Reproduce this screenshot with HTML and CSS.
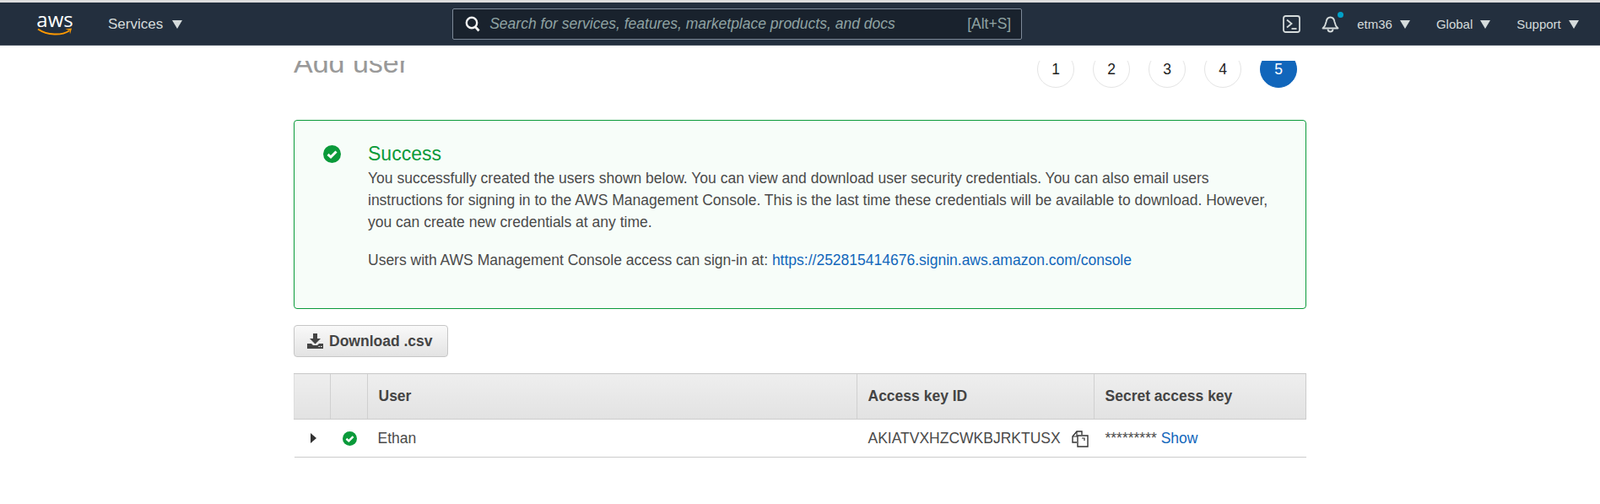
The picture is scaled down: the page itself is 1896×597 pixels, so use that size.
FILE: index.html
```html
<!DOCTYPE html>
<html>
  <head>
    <title>Add user</title>
    <link rel="stylesheet" href="styles.css">
  </head>
  <body>
    <nav class="navbar">
      <a class="logo">
        <span class="logo-text">aws</span>
        <svg class="logo-smile" width="42" height="11" viewBox="0 0 42 11">
          <path d="M1 2.500C12 10 29 10.500 38 4.500" fill="none" stroke="#f90" stroke-width="2"/>
          <path d="M33.500 2.500L41 1.500L39 8.500L38.500 4Z" fill="#f90"/>
        </svg>
      </a>
      <div class="nav-item services">Services <span class="caret"></span></div>
      <div class="search">
        <svg class="search-icon" width="20" height="20" viewBox="0 0 20 20">
          <circle cx="9" cy="9" r="6.200" fill="none" stroke="#f2f3f3" stroke-width="2.400"/>
          <path d="M13 13.500L17.500 18.500" stroke="#f2f3f3" stroke-width="2.800"/>
        </svg>
        <span class="search-hint">Search for services, features, marketplace products, and docs</span>
        <span class="search-key">[Alt+S]</span>
      </div>
      <svg class="icon-shell" width="21" height="21" viewBox="0 0 21 21">
        <rect x="1" y="1" width="19" height="19" rx="2.500" fill="none" stroke="#d5dbdb" stroke-width="1.800"/>
        <path d="M5 5.500L10.500 10L5 14.500" fill="none" stroke="#d5dbdb" stroke-width="1.800"/>
        <path d="M10.500 16H16.500" stroke="#d5dbdb" stroke-width="1.800"/>
      </svg>
      <div class="bell">
        <svg width="22" height="22" viewBox="0 0 22 22">
          <path d="M1.500 16.500C4.500 14 5 12 5.500 9C6 5.500 8 3.500 10.500 3.500C13 3.500 15 5.500 15.500 9C16 12 16.500 14 19.500 16.500Z" fill="none" stroke="#d5dbdb" stroke-width="1.800" stroke-linejoin="round"/>
          <path d="M7.500 17.500A3 3 0 0 0 13.500 17.500" fill="none" stroke="#d5dbdb" stroke-width="1.800"/>
        </svg>
        <span class="bell-dot"></span>
      </div>
      <div class="nav-item user">etm36 <span class="caret"></span></div>
      <div class="nav-item region">Global <span class="caret"></span></div>
      <div class="nav-item support">Support <span class="caret"></span></div>
    </nav>

    <main class="viewport">
      <div class="container">
        <div class="title-row">
          <h1>Add user</h1>
          <div class="steps">
            <div class="step">1</div>
            <div class="step">2</div>
            <div class="step">3</div>
            <div class="step">4</div>
            <div class="step active">5</div>
          </div>
        </div>

        <div class="alert">
          <svg class="check alert-icon" width="21" height="21" viewBox="0 0 21 21">
            <circle cx="10.500" cy="10.500" r="10.500" fill="#0a9a3a"/>
            <path d="M5.500 10.800L9 14L15.500 7.500" fill="none" stroke="#fff" stroke-width="3"/>
          </svg>
          <div class="alert-body">
            <div class="alert-title">Success</div>
            <p>You successfully created the users shown below. You can view and download user security credentials. You can also email users instructions for signing in to the AWS Management Console. This is the last time these credentials will be available to download. However, you can create new credentials at any time.</p>
            <p class="alert-login">Users with AWS Management Console access can sign-in at: <a href="#">https://252815414676.signin.aws.amazon.com/console</a></p>
          </div>
        </div>

        <button class="btn-download">
          <svg width="19" height="18" viewBox="0 0 19 18">
            <path d="M7 0H12V6H16L9.500 12.500L3 6H7Z" fill="#444"/>
            <path d="M0 12H5L7 14H12L14 12H19V18H0Z" fill="#444"/>
            <path d="M13.500 15.500H15M16 15.500H17.500" stroke="#fff" stroke-width="1"/>
          </svg>
          Download .csv
        </button>

        <table class="users">
          <thead>
            <tr>
              <th class="col-toggle"></th>
              <th class="col-status"></th>
              <th class="col-user">User</th>
              <th class="col-key">Access key ID</th>
              <th>Secret access key</th>
            </tr>
          </thead>
          <tbody>
            <tr>
              <td class="toggle"><span class="caret-right"></span></td>
              <td class="status">
                <svg class="check" width="17" height="17" viewBox="0 0 21 21">
                  <circle cx="10.500" cy="10.500" r="10.500" fill="#0a9a3a"/>
                  <path d="M5.500 10.800L9 14L15.500 7.500" fill="none" stroke="#fff" stroke-width="3"/>
                </svg>
              </td>
              <td class="name">Ethan</td>
              <td class="key">
                AKIATVXHZCWKBJRKTUSX
                <svg class="copy" width="20" height="20" viewBox="0 0 20 20">
                  <path d="M6 14H1V7L6 1H12V5" fill="none" stroke="#333" stroke-width="1.400"/>
                  <path d="M6 1V7H1" fill="none" stroke="#333" stroke-width="1.200"/>
                  <path d="M7 6H19V19H7Z" fill="#fff" stroke="#333" stroke-width="1.400"/>
                  <path d="M12 9H15V12" fill="none" stroke="#333" stroke-width="1.200"/>
                </svg>
              </td>
              <td class="secret"><span class="stars">*********</span> <a href="#">Show</a></td>
            </tr>
          </tbody>
        </table>
      </div>
    </main>
  </body>
</html>
```

FILE: styles.css
```css
html,
body {
  margin: 0;
  padding: 0;
  height: 100%;
  overflow: hidden;
}
body {
  font-family: "Liberation Sans", Arial, sans-serif;
  background: white;
  color: #4a4a4a;
  font-size: 17.5px;
}
a {
  color: #1166bb;
  text-decoration: none;
}

/* top bar */
.navbar {
  display: flex;
  align-items: center;
  height: 50px;
  border-top: 3px solid #ddd;
  border-bottom: 1px solid #414c5a;
  background: #232f3e;
  color: #d5dbdb;
}
.logo {
  display: flex;
  flex-direction: column;
  align-items: center;
  width: 42px;
  margin-left: 44px;
  margin-top: -2px;
}
.logo-text {
  color: white;
  font-family: "Open Sans", sans-serif;
  font-size: 24px;
  line-height: 22px;
}
.logo-smile {
  margin-top: -2px;
}
.nav-item {
  display: flex;
  align-items: center;
  gap: 9px;
  font-size: 15px;
  padding-top: 1px;
}
.caret {
  width: 0;
  height: 0;
  border-left: 6px solid transparent;
  border-right: 6px solid transparent;
  border-top: 10px solid #d5dbdb;
}
.services {
  gap: 11px;
  margin-left: 42px;
  font-size: 17px;
}
.search {
  display: flex;
  align-items: center;
  width: 673px;
  height: 35px;
  margin-left: 320px;
  border: 1px solid #7d8998;
  border-radius: 2px;
  background: #19222d;
}
.search-icon {
  margin-left: 13px;
}
.search-hint {
  margin-left: 10px;
  color: #8fa3a3;
  font-style: italic;
  font-size: 17.5px;
}
.search-key {
  margin-left: auto;
  margin-right: 12px;
  color: #8fa3a3;
  font-size: 17.5px;
}
.icon-shell {
  margin-left: 309px;
}
.bell {
  position: relative;
  display: flex;
  margin-left: 25px;
}
.bell-dot {
  position: absolute;
  top: -3px;
  right: -4px;
  width: 7px;
  height: 7px;
  border-radius: 50%;
  background: #00a1c9;
}
.user {
  margin-left: 20px;
}
.region {
  margin-left: 31px;
}
.support {
  margin-left: 31px;
}

/* scrolled page area, clipped under the bar */
.viewport {
  margin-top: 18px;
  overflow: hidden;
  height: 525px;
}
.container {
  width: 1200px;
  margin: 0 auto;
}
.title-row {
  display: flex;
  justify-content: space-between;
  height: 44px;
  margin-top: -12px;
  padding-right: 11px;
}
h1 {
  margin: 0;
  color: #999;
  font-size: 34px;
  font-weight: normal;
  line-height: 34px;
  margin-top: -3px;
}
.steps {
  display: flex;
  gap: 22px;
}
.step {
  display: flex;
  align-items: center;
  justify-content: center;
  width: 44px;
  height: 44px;
  box-sizing: border-box;
  border: 1px solid #e4e4e4;
  border-radius: 50%;
  color: #222;
  font-size: 17.5px;
}
.step.active {
  border-color: #1166bb;
  background: #1166bb;
  color: white;
}

/* success box */
.alert {
  display: flex;
  height: 224px;
  margin-top: 38px;
  box-sizing: border-box;
  padding: 24px 30px 0 34px;
  border: 1px solid #0a9a3a;
  border-radius: 4px;
  background: #f7fdf9;
}
.alert-icon {
  flex: none;
  margin-top: 5px;
}
.alert-body {
  margin-left: 32px;
  line-height: 26px;
}
.alert-title {
  color: #0a9a3a;
  font-size: 23px;
  line-height: 31px;
}
.alert-body p {
  margin: 0;
}
.alert-body .alert-login {
  margin-top: 19px;
}

.btn-download {
  display: flex;
  align-items: center;
  gap: 7px;
  width: 183px;
  height: 38px;
  margin-top: 19px;
  padding: 0 0 0 15px;
  border: 1px solid #c6c6c6;
  border-radius: 4px;
  background: linear-gradient(#f9f9f9, #e3e3e3);
  color: #444;
  font-family: inherit;
  font-size: 17.5px;
  font-weight: bold;
}

/* users table */
.users {
  width: 1200px;
  margin-top: 19px;
  border-collapse: collapse;
  table-layout: fixed;
}
.users th {
  box-sizing: border-box;
  height: 54px;
  padding: 0 0 0 13px;
  border-top: 1px solid #ccc;
  border-bottom: 1px solid #ccc;
  background: linear-gradient(#eee, #e2e2e2);
  box-shadow: inset -1px 0 0 #d0d0d0;
  color: #444;
  font-size: 17.5px;
  text-align: left;
}
.users th:first-child {
  border-left: 1px solid #ddd;
}
.users th:last-child {
  border-right: 1px solid #ccc;
  box-shadow: none;
}
.col-toggle {
  width: 43px;
}
.col-status {
  width: 44px;
}
.col-user {
  width: 580px;
}
.col-key {
  width: 281px;
}
.users td {
  height: 44px;
  padding: 0 0 0 13px;
  border-bottom: 1px solid #ccc;
}
.users td.toggle {
  padding: 0 0 0 19px;
}
.users td.status {
  padding: 0 0 0 14px;
}
.users td.name {
  padding-left: 12px;
}
.caret-right {
  display: block;
  width: 0;
  height: 0;
  border-top: 6px solid transparent;
  border-bottom: 6px solid transparent;
  border-left: 7px solid #333;
}
.check {
  display: block;
}
.key {
  white-space: nowrap;
}
.copy {
  margin-left: 8px;
  vertical-align: -5px;
}
.stars {
  font-size: 17.5px;
}
```
